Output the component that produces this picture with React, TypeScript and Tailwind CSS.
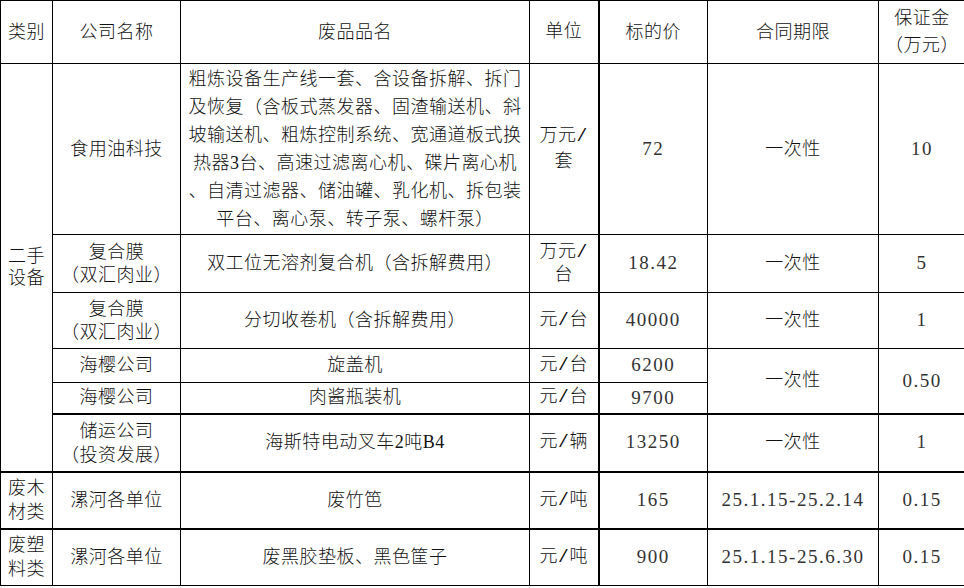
import React from "react";

const font = {
  fontFamily: '"Liberation Serif", "Noto Sans CJK SC", serif',
};

type Row = {
  h: string;
  cells: React.ReactNode;
};

const td = "border border-black p-0 text-center align-middle";
const mono = "font-['Liberation_Mono','Noto_Sans_CJK_SC',monospace]";
const unit = `${td} border-r-2 ${mono}`;
const num = "text-[19px] tracking-[1.5px] text-[#333]";

function Lines({ items, lh = "leading-[24px]" }: { items: string[]; lh?: string }) {
  return (
    <div className={lh}>
      {items.map((t, i) => (
        <div key={i}>{t}</div>
      ))}
    </div>
  );
}

export default function App() {
  const rows: Row[] = [
    {
      h: "h-[171px]",
      cells: (
        <>
          <td rowSpan={6} className={td}>
            <Lines items={["二手", "设备"]} lh="leading-[22px]" />
          </td>
          <td className={td}>食用油科技</td>
          <td className={td}>
            <Lines
              lh="leading-[28px]"
              items={[
                "粗炼设备生产线一套、含设备拆解、拆门",
                "及恢复（含板式蒸发器、固渣输送机、斜",
                "坡输送机、粗炼控制系统、宽通道板式换",
                "热器3台、高速过滤离心机、碟片离心机",
                "、自清过滤器、储油罐、乳化机、拆包装",
                "平台、离心泵、转子泵、螺杆泵）",
              ]}
            />
          </td>
          <td className={unit}>
            <Lines items={["万元/", "套"]} lh="leading-[26px]" />
          </td>
          <td className={`${td} ${num}`}>72</td>
          <td className={td}>一次性</td>
          <td className={`${td} ${num}`}>10</td>
        </>
      ),
    },
    {
      h: "h-[58px]",
      cells: (
        <>
          <td className={td}>
            <Lines items={["复合膜", "（双汇肉业）"]} lh="leading-[23px]" />
          </td>
          <td className={td}>双工位无溶剂复合机（含拆解费用）</td>
          <td className={unit}>
            <Lines items={["万元/", "台"]} lh="leading-[23px]" />
          </td>
          <td className={`${td} ${num}`}>18.42</td>
          <td className={td}>一次性</td>
          <td className={`${td} ${num}`}>5</td>
        </>
      ),
    },
    {
      h: "h-[56px]",
      cells: (
        <>
          <td className={td}>
            <Lines items={["复合膜", "（双汇肉业）"]} lh="leading-[23px]" />
          </td>
          <td className={td}>分切收卷机（含拆解费用）</td>
          <td className={unit}>元/台</td>
          <td className={`${td} ${num}`}>40000</td>
          <td className={td}>一次性</td>
          <td className={`${td} ${num}`}>1</td>
        </>
      ),
    },
    {
      h: "h-[34px]",
      cells: (
        <>
          <td className={td}>海樱公司</td>
          <td className={td}>旋盖机</td>
          <td className={unit}>元/台</td>
          <td className={`${td} ${num}`}>6200</td>
          <td rowSpan={2} className={td}>一次性</td>
          <td rowSpan={2} className={`${td} ${num}`}>0.50</td>
        </>
      ),
    },
    {
      h: "h-[31px]",
      cells: (
        <>
          <td className={td}>海樱公司</td>
          <td className={td}>肉酱瓶装机</td>
          <td className={unit}>元/台</td>
          <td className={`${td} ${num}`}>9700</td>
        </>
      ),
    },
    {
      h: "h-[58px]",
      cells: (
        <>
          <td className={`${td} border-t-2`}>
            <Lines items={["储运公司", "（投资发展）"]} lh="leading-[24px]" />
          </td>
          <td className={`${td} border-t-2`}>海斯特电动叉车2吨B4</td>
          <td className={`${unit} border-t-2`}>元/辆</td>
          <td className={`${td} ${num} border-t-2`}>13250</td>
          <td className={`${td} border-t-2`}>一次性</td>
          <td className={`${td} ${num} border-t-2`}>1</td>
        </>
      ),
    },
  ];

  const tail = [
    { cat: ["废木", "材类"], item: "废竹笆", price: "165", term: "25.1.15-25.2.14" },
    { cat: ["废塑", "料类"], item: "废黑胶垫板、黑色筐子", price: "900", term: "25.1.15-25.6.30" },
  ];

  return (
    <div className="w-[964px] h-[588px] overflow-hidden bg-white text-[#111]" style={font}>
      <table className="w-[965px] table-fixed border-collapse text-[18px] font-light tracking-[0.5px]">
        <colgroup>
          <col className="w-[52px]" />
          <col className="w-[128px]" />
          <col className="w-[349px]" />
          <col className="w-[69px]" />
          <col className="w-[109px]" />
          <col className="w-[171px]" />
          <col className="w-[87px]" />
        </colgroup>
        <thead>
          <tr className="h-[63px]">
            <th className={`${td} font-light`}>类别</th>
            <th className={`${td} font-light`}>公司名称</th>
            <th className={`${td} font-light`}>废品品名</th>
            <th className={`${unit} font-light`}>单位</th>
            <th className={`${td} font-light`}>标的价</th>
            <th className={`${td} font-light`}>合同期限</th>
            <th className={`${td} font-light`}>
              <Lines items={["保证金", "（万元）"]} lh="leading-[27px]" />
            </th>
          </tr>
        </thead>
        <tbody>
          {rows.map((r, i) => (
            <tr key={i} className={r.h}>
              {r.cells}
            </tr>
          ))}
          {tail.map((t) => (
            <tr key={t.item} className="h-[57px]">
              <td className={`${td} border-t-2`}>
                <Lines items={t.cat} lh="leading-[24px]" />
              </td>
              <td className={`${td} border-t-2`}>漯河各单位</td>
              <td className={`${td} border-t-2`}>{t.item}</td>
              <td className={`${unit} border-t-2`}>元/吨</td>
              <td className={`${td} ${num} border-t-2`}>{t.price}</td>
              <td className={`${td} ${num} border-t-2`}>{t.term}</td>
              <td className={`${td} ${num} border-t-2`}>0.15</td>
            </tr>
          ))}
        </tbody>
      </table>
    </div>
  );
}
